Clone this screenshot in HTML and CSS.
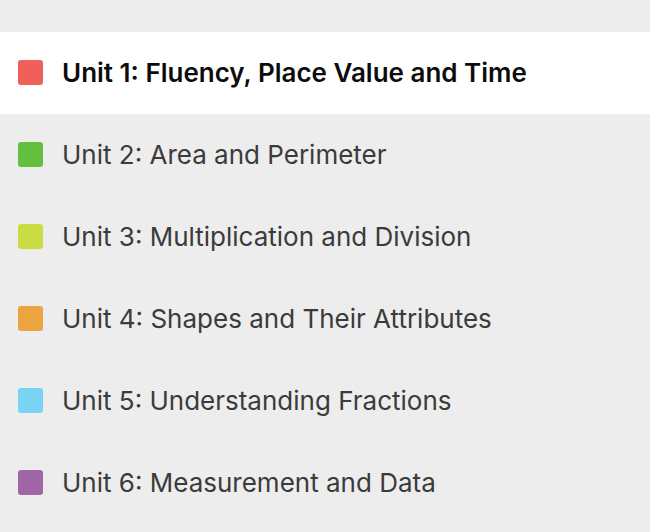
FILE: index.html
```html
<!DOCTYPE html>
<html lang="en">
<head>
    <meta charset="UTF-8">
    <meta name="viewport" content="width=device-width, initial-scale=1.0">
    <title>Units</title>
    <link rel="stylesheet" href="styles.css">
</head>
<body>
    <ul class="unit-list">
        <li class="unit active">
            <span class="swatch red"></span>
            <span class="unit-title">Unit 1: Fluency, Place Value and Time</span>
        </li>
        <li class="unit">
            <span class="swatch green"></span>
            <span class="unit-title">Unit 2: Area and Perimeter</span>
        </li>
        <li class="unit">
            <span class="swatch lime"></span>
            <span class="unit-title">Unit 3: Multiplication and Division</span>
        </li>
        <li class="unit">
            <span class="swatch orange"></span>
            <span class="unit-title">Unit 4: Shapes and Their Attributes</span>
        </li>
        <li class="unit">
            <span class="swatch blue"></span>
            <span class="unit-title">Unit 5: Understanding Fractions</span>
        </li>
        <li class="unit">
            <span class="swatch purple"></span>
            <span class="unit-title">Unit 6: Measurement and Data</span>
        </li>
    </ul>
</body>
</html>
```

FILE: styles.css
```css
body {
    margin: 0;
    background: #ededed;
    font-family: 'Inter', 'Liberation Sans', sans-serif;
}

.unit-list {
    list-style: none;
    margin: 0;
    padding: 32px 0 0;
}

.unit {
    height: 82px;
    box-sizing: border-box;
    padding: 0 0 2px 18px;
    display: flex;
    align-items: center;
    gap: 19px;
    color: #3b3b3b;
    font-size: 26px;
}

.unit.active {
    background: #fff;
    color: #0c0c0c;
    font-weight: 600;
}

.swatch {
    width: 25px;
    height: 25px;
    border-radius: 3px;
    flex-shrink: 0;
}

.red { background: #ef605a; }
.green { background: #62c03e; }
.lime { background: #c9dc44; }
.orange { background: #eba43f; }
.blue { background: #79d3f4; }
.purple { background: #a066a8; }
```
